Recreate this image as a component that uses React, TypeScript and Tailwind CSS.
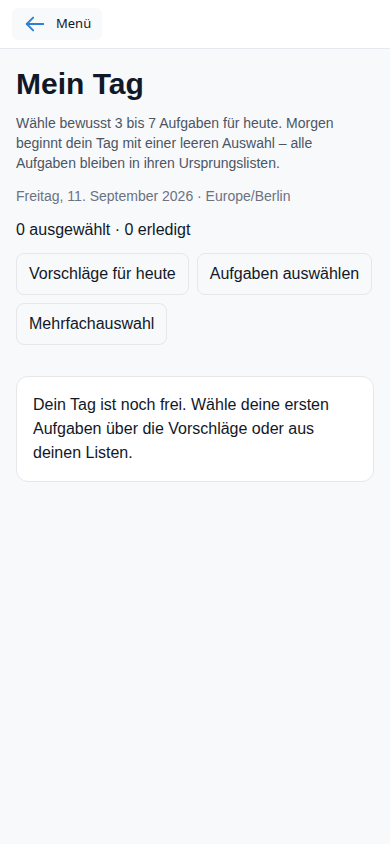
export default function App() {
  const actions = ["Vorschläge für heute", "Aufgaben auswählen", "Mehrfachauswahl"];

  return (
    <div className="min-h-screen bg-[#f8f9fb] text-[#111827]" style={{ fontFamily: '"Liberation Sans", Arial, sans-serif' }}>
      {/* top bar */}
      <header className="h-[49px] bg-white border-b border-[#e5e9f0] px-3 pt-2">
        <button className="flex h-[32px] items-center gap-[10px] rounded-md bg-[#f8f9fa] pl-3 pr-[11px] text-[13px] text-[#111827]" style={{ fontFamily: '"Noto Sans", sans-serif' }}>
          <svg width="22" height="22" viewBox="0 0 24 24" fill="none" stroke="#2c7fd1" strokeWidth="2" strokeLinecap="round" strokeLinejoin="round">
            <path d="M21 12H3" />
            <path d="M10 5l-7 7 7 7" />
          </svg>
          Menü
        </button>
      </header>

      <main className="px-4 pt-[17px]">
        <h1 className="text-[30px] font-bold leading-9">Mein Tag</h1>
        <p className="mt-[11px] text-sm leading-5 text-[#4b5563]">
          Wähle bewusst 3 bis 7 Aufgaben für heute. Morgen beginnt dein Tag mit einer leeren Auswahl – alle Aufgaben bleiben in ihren Ursprungslisten.
        </p>
        <p className="mt-[13px] text-sm leading-5 text-[#6b7280]">Freitag, 11. September 2026 · Europe/Berlin</p>
        <p className="mt-3 text-base leading-6">0 ausgewählt · 0 erledigt</p>

        <div className="mt-[11px] flex flex-wrap gap-x-2 gap-y-2">
          {actions.map((a) => (
            <button key={a} className="h-[42px] rounded-lg border border-[#e5e7eb] bg-[#f8f9fb] px-3 text-base text-[#111827]">
              {a}
            </button>
          ))}
        </div>

        <div className="mt-[31px] rounded-xl border border-[#e5e7eb] bg-white px-4 py-4 text-base leading-6">
          Dein Tag ist noch frei. Wähle deine ersten Aufgaben über die Vorschläge oder aus deinen Listen.
        </div>
      </main>
    </div>
  );
}
